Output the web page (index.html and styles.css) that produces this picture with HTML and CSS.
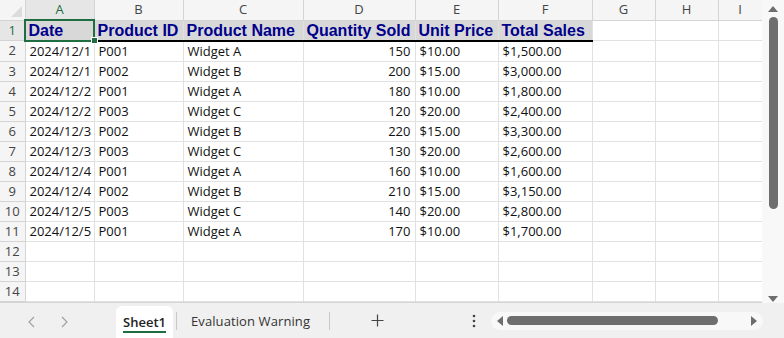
FILE: index.html
```html
<!DOCTYPE html>
<html lang="en">
<head>
  <meta charset="UTF-8" />
  <title>Sales</title>
  <link rel="stylesheet" href="styles.css">
</head>
<body>

  <!-- Sheet area -->
  <div class="sheet">
    <div class="grid-wrap">
      <table class="grid">
        <colgroup>
          <col style="width:25px"><col style="width:69px"><col style="width:89px"><col style="width:120px">
          <col style="width:112px"><col style="width:83px"><col style="width:94px"><col style="width:63px">
          <col style="width:63px"><col style="width:44px">
        </colgroup>
        <tr class="colhead">
          <th class="corner"><span class="tri"></span></th>
          <th class="active">A</th><th>B</th><th>C</th><th>D</th><th>E</th><th>F</th><th>G</th><th>H</th><th>I</th>
        </tr>
        <tr class="title-row">
          <th class="active">1</th>
          <td class="selected">Date</td><td>Product ID</td><td>Product Name</td><td>Quantity Sold</td><td>Unit Price</td><td>Total Sales</td>
          <td class="blank"></td><td class="blank"></td><td class="blank"></td>
        </tr>
        <tr><th>2</th><td>2024/12/1</td><td>P001</td><td>Widget A</td><td class="num">150</td><td>$10.00</td><td>$1,500.00</td><td></td><td></td><td></td></tr>
        <tr><th>3</th><td>2024/12/1</td><td>P002</td><td>Widget B</td><td class="num">200</td><td>$15.00</td><td>$3,000.00</td><td></td><td></td><td></td></tr>
        <tr><th>4</th><td>2024/12/2</td><td>P001</td><td>Widget A</td><td class="num">180</td><td>$10.00</td><td>$1,800.00</td><td></td><td></td><td></td></tr>
        <tr><th>5</th><td>2024/12/2</td><td>P003</td><td>Widget C</td><td class="num">120</td><td>$20.00</td><td>$2,400.00</td><td></td><td></td><td></td></tr>
        <tr><th>6</th><td>2024/12/3</td><td>P002</td><td>Widget B</td><td class="num">220</td><td>$15.00</td><td>$3,300.00</td><td></td><td></td><td></td></tr>
        <tr><th>7</th><td>2024/12/3</td><td>P003</td><td>Widget C</td><td class="num">130</td><td>$20.00</td><td>$2,600.00</td><td></td><td></td><td></td></tr>
        <tr><th>8</th><td>2024/12/4</td><td>P001</td><td>Widget A</td><td class="num">160</td><td>$10.00</td><td>$1,600.00</td><td></td><td></td><td></td></tr>
        <tr><th>9</th><td>2024/12/4</td><td>P002</td><td>Widget B</td><td class="num">210</td><td>$15.00</td><td>$3,150.00</td><td></td><td></td><td></td></tr>
        <tr><th>10</th><td>2024/12/5</td><td>P003</td><td>Widget C</td><td class="num">140</td><td>$20.00</td><td>$2,800.00</td><td></td><td></td><td></td></tr>
        <tr><th>11</th><td>2024/12/5</td><td>P001</td><td>Widget A</td><td class="num">170</td><td>$10.00</td><td>$1,700.00</td><td></td><td></td><td></td></tr>
        <tr><th>12</th><td></td><td></td><td></td><td></td><td></td><td></td><td></td><td></td><td></td></tr>
        <tr><th>13</th><td></td><td></td><td></td><td></td><td></td><td></td><td></td><td></td><td></td></tr>
        <tr><th>14</th><td></td><td></td><td></td><td></td><td></td><td></td><td></td><td></td><td></td></tr>
        <tr><th></th><td></td><td></td><td></td><td></td><td></td><td></td><td></td><td></td><td></td></tr>
      </table>
    </div>

    <!-- Vertical scrollbar -->
    <div class="vscroll">
      <span class="arrow up"></span>
      <div class="vtrack"><div class="vthumb"></div></div>
      <span class="arrow down"></span>
    </div>
  </div>

  <!-- Sheet tabs -->
  <div class="tabbar">
    <div class="nav">
      <svg width="10" height="14" viewBox="0 0 10 14"><path d="M7 2 L2 7 L7 12" fill="none" stroke="#a0a0a0" stroke-width="1.2"/></svg>
      <svg width="10" height="14" viewBox="0 0 10 14"><path d="M3 2 L8 7 L3 12" fill="none" stroke="#a0a0a0" stroke-width="1.2"/></svg>
    </div>
    <div class="tab current">Sheet1</div>
    <span class="sep"></span>
    <div class="tab">Evaluation Warning</div>
    <span class="sep"></span>
    <div class="add">
      <svg width="13" height="13" viewBox="0 0 13 13"><path d="M6.5 0.5 V12.5 M0.5 6.5 H12.5" stroke="#444" stroke-width="1.2"/></svg>
    </div>
    <div class="more">
      <svg width="4" height="14" viewBox="0 0 4 14"><circle cx="2" cy="2" r="1.3" fill="#444"/><circle cx="2" cy="7" r="1.3" fill="#444"/><circle cx="2" cy="12" r="1.3" fill="#444"/></svg>
    </div>
    <div class="hscroll">
      <span class="harrow left"></span>
      <div class="hthumb"></div>
      <span class="harrow right"></span>
    </div>
  </div>

</body>
</html>
```

FILE: styles.css
```css
/* Global */
body {
  margin: 0;
  width: 784px;
  height: 338px;
  overflow: hidden;
  background: #f0f0f0;
  font-family: "Open Sans", sans-serif;
  display: flex;
  flex-direction: column;
}
/* Sheet area */
.sheet {
  height: 303px;
  display: flex;
  background: #fff;
}
.grid-wrap {
  width: 762px;
  height: 302px;
  overflow: hidden;
  border-bottom: 1px solid #d4d4d4;
}
.grid {
  table-layout: fixed;
  border-collapse: collapse;
  width: 762px;
}
.grid tr {
  height: 20px;
}
.grid td {
  border-right: 1px solid #e1e1e1;
  border-bottom: 1px solid #e1e1e1;
  padding: 0 4px;
  font-size: 13px;
  color: #111;
  white-space: nowrap;
  overflow: hidden;
  line-height: 19px;
}
.grid td.num {
  text-align: right;
}
.grid th {
  background: #f5f5f5;
  border-right: 1px solid #d4d4d4;
  border-bottom: 1px solid #d4d4d4;
  font-weight: normal;
  font-size: 13px;
  color: #444;
  padding: 0;
  line-height: 19px;
}
.colhead th {
  height: 19px;
}
.grid th.active {
  color: #1e6e42;
  background: #e6e6e6;
}
/* Corner triangle */
.corner {
  position: relative;
}
.tri {
  position: absolute;
  right: 3px;
  bottom: 3px;
  width: 0;
  height: 0;
  border-left: 11px solid transparent;
  border-bottom: 11px solid #dcdcdc;
}
/* Title row */
.title-row td {
  background: #d8d8d8;
  color: #00008b;
  font-family: "Liberation Sans", sans-serif;
  font-weight: bold;
  font-size: 16px;
  padding: 0 3px;
  border-bottom: 2px solid #000;
}
.title-row td.blank {
  background: #fff;
  border-bottom: 1px solid #e1e1e1;
}
.title-row td.selected {
  position: relative;
  overflow: visible;
  outline: 2px solid #1e6e42;
  outline-offset: -1px;
}
.selected::after {
  content: "";
  position: absolute;
  right: -4px;
  bottom: -4px;
  width: 5px;
  height: 5px;
  background: #1e6e42;
  border: 1px solid #fff;
  z-index: 2;
}
/* Vertical scrollbar */
.vscroll {
  width: 22px;
  background: #f8f8f8;
  display: flex;
  flex-direction: column;
  align-items: center;
  padding-top: 6px;
  padding-bottom: 1px;
  box-sizing: border-box;
}
.arrow {
  width: 0;
  height: 0;
  border-left: 5px solid transparent;
  border-right: 5px solid transparent;
}
.arrow.up {
  border-bottom: 6px solid #6e6e6e;
}
.arrow.down {
  border-top: 6px solid #6e6e6e;
  margin-top: auto;
}
.vtrack {
  width: 9px;
  height: 270px;
  padding-top: 5px;
}
.vthumb {
  width: 9px;
  height: 192px;
  background: #6e6e6e;
  border-radius: 5px;
}
/* Tab bar */
.tabbar {
  flex: 1;
  display: flex;
  align-items: stretch;
  font-size: 13px;
  color: #333;
}
.nav {
  width: 116px;
  display: flex;
  align-items: center;
  gap: 22px;
  padding-left: 27px;
  box-sizing: border-box;
  padding-top: 2px;
}
.tab {
  display: flex;
  align-items: center;
  padding: 1px 16px 0 14px;
  letter-spacing: 0.1px;
}
.tab.current {
  background: #fff;
  margin-top: 3px;
  padding: 0 7px;
  border-radius: 6px 6px 0 0;
  font-weight: 600;
  color: #222;
  letter-spacing: 0;
  position: relative;
}
.tab.current::after {
  content: "";
  position: absolute;
  left: 7px;
  right: 7px;
  bottom: 5px;
  height: 2px;
  background: #1e6e42;
}
.sep {
  width: 1px;
  height: 18px;
  background: #c8c8c8;
  align-self: center;
  margin-left: 3px;
}
.add {
  width: 94px;
  display: flex;
  align-items: center;
  justify-content: center;
}
.more {
  width: 20px;
  margin-left: 40px;
  display: flex;
  align-items: center;
  justify-content: center;
}
.hscroll {
  width: 272px;
  height: 18px;
  align-self: center;
  margin-left: 7px;
  background: #f8f8f8;
  border-radius: 9px;
  display: flex;
  align-items: center;
  padding: 0 6px;
  box-sizing: border-box;
}
.harrow {
  width: 0;
  height: 0;
  border-top: 5px solid transparent;
  border-bottom: 5px solid transparent;
}
.harrow.left {
  border-right: 6px solid #6e6e6e;
}
.harrow.right {
  border-left: 6px solid #6e6e6e;
  margin-left: auto;
}
.hthumb {
  width: 211px;
  height: 9px;
  margin-left: 4px;
  background: #6e6e6e;
  border-radius: 5px;
}
```
